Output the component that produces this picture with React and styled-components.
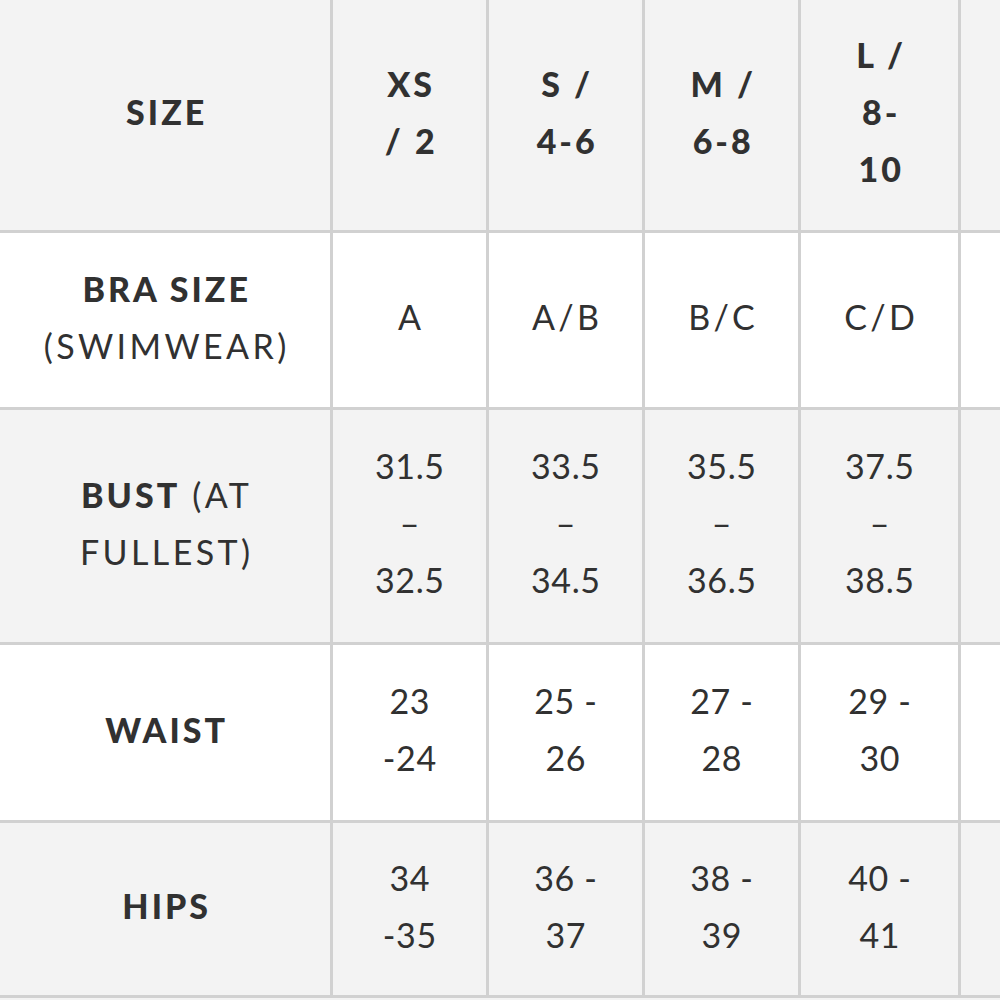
import React from 'react';
import styled, { createGlobalStyle } from 'styled-components';

const GlobalStyle = createGlobalStyle`
  html, body {
    margin: 0;
    padding: 0;
    background: #f3f3f3;
  }
  body {
    font-family: Lato, 'Noto Sans', sans-serif;
    color: #313131;
  }
`;

const sizes = ['XS / 2', 'S / 4-6', 'M / 6-8', 'L / 8-10'];

const rows = [
  {
    key: 'size',
    shaded: true,
    height: 230,
    label: [<b key="a">SIZE</b>],
    cells: [
      [<b key="1">XS</b>, <b key="2">/ 2</b>],
      [<b key="1">S /</b>, <b key="2">4-6</b>],
      [<b key="1">M /</b>, <b key="2">6-8</b>],
      [<b key="1">L /</b>, <b key="2">8-</b>, <b key="3">10</b>],
    ],
  },
  {
    key: 'bra',
    shaded: false,
    height: 174,
    label: [<b key="a">BRA SIZE</b>, '(SWIMWEAR)'],
    cells: [['A'], ['A/B'], ['B/C'], ['C/D']],
  },
  {
    key: 'bust',
    shaded: true,
    height: 232,
    label: [
      <span key="a">
        <b>BUST</b> (AT
      </span>,
      'FULLEST)',
    ],
    cells: [
      ['31.5', '–', '32.5'],
      ['33.5', '–', '34.5'],
      ['35.5', '–', '36.5'],
      ['37.5', '–', '38.5'],
    ],
  },
  {
    key: 'waist',
    shaded: false,
    height: 175,
    label: [<b key="a">WAIST</b>],
    cells: [
      ['23', '-24'],
      ['25 -', '26'],
      ['27 -', '28'],
      ['29 -', '30'],
    ],
  },
  {
    key: 'hips',
    shaded: true,
    height: 172,
    label: [<b key="a">HIPS</b>],
    cells: [
      ['34', '-35'],
      ['36 -', '37'],
      ['38 -', '39'],
      ['40 -', '41'],
    ],
  },
];

// plain number lines keep tight spacing, words get spread out
const isWide = (line) => typeof line !== 'string' || /[A-Z]/.test(line);

const App = () => {
  return (
    <>
      <GlobalStyle />
      <Table aria-label={`Size chart: ${sizes.join(', ')}`}>
        {rows.map((row) => (
          <React.Fragment key={row.key}>
            <Cell $shaded={row.shaded} style={{ height: row.height }}>
              <Stack>
                {row.label.map((line, i) => (
                  <Line key={i} $wide={isWide(line)}>
                    {line}
                  </Line>
                ))}
              </Stack>
            </Cell>
            {row.cells.map((lines, c) => (
              <Cell key={c} $shaded={row.shaded}>
                <Stack>
                  {lines.map((line, i) => (
                    <Line key={i} $wide={isWide(line)}>
                      {line}
                    </Line>
                  ))}
                </Stack>
              </Cell>
            ))}
            <Cell $shaded={row.shaded} />
          </React.Fragment>
        ))}
      </Table>
    </>
  );
};

const Table = styled.div`
  display: grid;
  grid-template-columns: 330px 153px 153px 153px 157px 1fr;
  column-gap: 3px;
  row-gap: 3px;
  background: #d1d1d1;
  padding-bottom: 3px;
  width: 1000px;
`;

const Cell = styled.div`
  display: flex;
  align-items: center;
  justify-content: center;
  padding-bottom: 7px;
  box-sizing: border-box;
  background: ${(p) => (p.$shaded ? '#f3f3f3' : '#ffffff')};
  text-align: center;
  overflow: hidden;
`;

const Stack = styled.div`
  display: flex;
  flex-direction: column;
  align-items: center;
`;

const Line = styled.div`
  font-size: 34px;
  line-height: 57px;
  white-space: nowrap;
  letter-spacing: ${(p) => (p.$wide ? '3.4px' : '0.6px')};
  margin-right: ${(p) => (p.$wide ? '-3.4px' : '-0.6px')};

  b {
    font-weight: 900;
    letter-spacing: 3px;
  }
`;

export default App;
